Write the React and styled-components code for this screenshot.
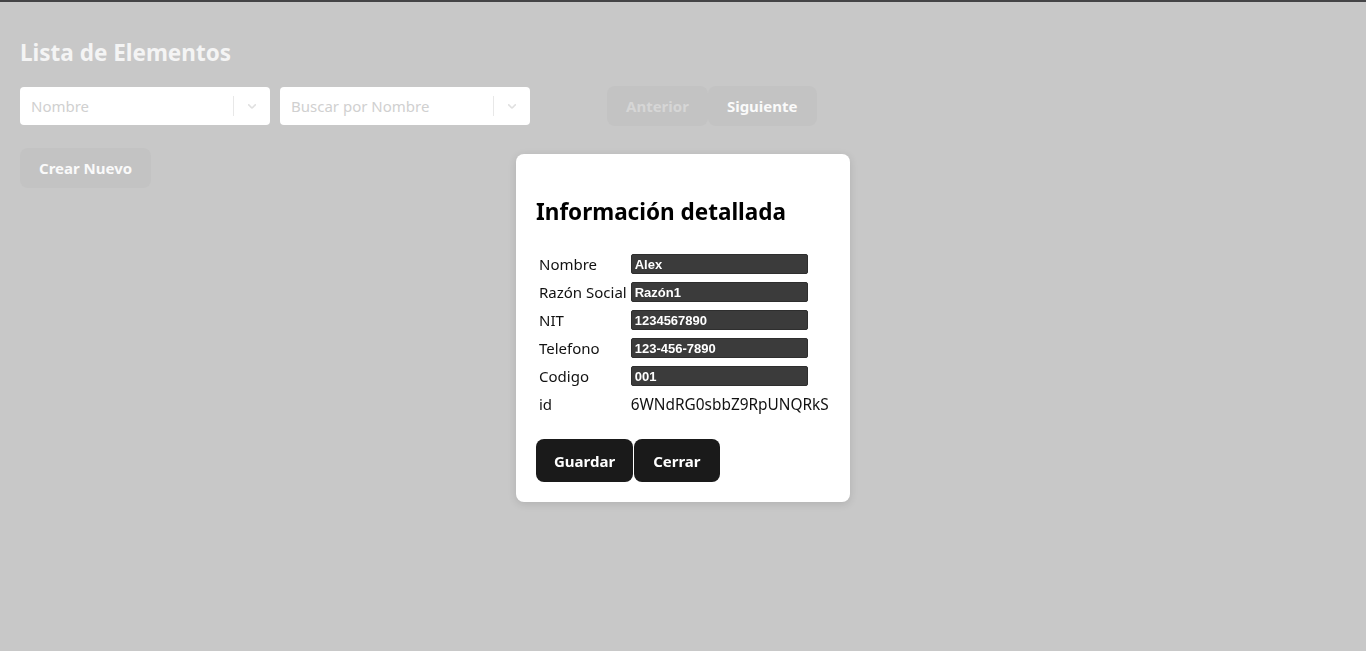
import React from "react";
import styled, { createGlobalStyle } from "styled-components";

const GlobalStyle = createGlobalStyle`
  body {
    margin: 0;
    background: #c8c8c8;
    font-family: "Noto Sans", "Open Sans", sans-serif;
  }
`;

const Page = styled.div`
  min-height: 651px;
  box-sizing: border-box;
  border-top: 2px solid #444446;
  padding: 36px 20px 0;
`;

const Title = styled.h1`
  margin: 0 0 18px;
  font-size: 22.5px;
  font-weight: 700;
  color: #f4f4f4;
  line-height: 30px;
`;

const Toolbar = styled.div`
  display: flex;
  align-items: center;
  gap: 10px;
`;

const Select = styled.div`
  width: 250px;
  height: 38px;
  box-sizing: border-box;
  background: #fff;
  border-radius: 4px;
  display: flex;
  align-items: center;
`;

const Placeholder = styled.span`
  flex: 1;
  padding-left: 11px;
  font-size: 15px;
  color: #d0d0d0;
`;

const Divider = styled.span`
  width: 1px;
  height: 20px;
  background: #e8e8e8;
`;

const Chevron = styled.span`
  width: 36px;
  display: flex;
  justify-content: center;
  color: #e0e0e0;
`;

const Pager = styled.div`
  display: flex;
  margin-left: 67px;
`;

const GhostButton = styled.button`
  height: 40px;
  padding: 0 ${({ pad }) => pad || 19}px;
  margin: 0;
  border: none;
  border-radius: 8px;
  background: #c3c3c3;
  font-family: inherit;
  font-size: 15px;
  font-weight: 700;
  color: ${({ dim }) => (dim ? "#d6d6d6" : "#fafafa")};
`;

const CreateRow = styled.div`
  margin-top: 22px;
`;

const Overlay = styled.div`
  position: fixed;
  inset: 0;
  display: flex;
  justify-content: center;
  align-items: flex-start;
  padding-top: 154px;
`;

const Modal = styled.div`
  width: 334px;
  box-sizing: border-box;
  background: #fff;
  border-radius: 8px;
  box-shadow: 0 2px 8px rgba(0, 0, 0, 0.12);
  padding: 43px 20px 20px;
`;

const ModalTitle = styled.h2`
  margin: 0 0 23px;
  font-size: 22.5px;
  font-weight: 700;
  color: #000;
  line-height: 30px;
`;

const Table = styled.table`
  border-collapse: collapse;
  margin-bottom: 21px;
`;

const Label = styled.td`
  padding: 0 4px 0 3px;
  height: 28px;
  font-size: 15px;
  color: #111;
  white-space: nowrap;
`;

const Value = styled.td`
  padding: 0;
  font-size: 15.4px;
  color: #111;
`;

const Field = styled.input`
  display: block;
  width: 177px;
  height: 20px;
  box-sizing: border-box;
  border: 1px solid #2e2e2e;
  border-radius: 2px;
  background: #3b3b3b;
  color: #fff;
  padding: 0 3px;
  font-family: "Liberation Sans", Arial, sans-serif;
  font-size: 13px;
  font-weight: 700;
`;

const Actions = styled.div`
  display: flex;
  gap: 1px;
`;

const DarkButton = styled.button`
  height: 43px;
  padding: 0 ${({ pad }) => pad || 18}px;
  margin: 0;
  border: none;
  border-radius: 8px;
  background: #1a1a1a;
  color: #fff;
  font-family: inherit;
  font-size: 15px;
  font-weight: 700;
`;

const rows = [
  ["Nombre", "Alex"],
  ["Razón Social", "Razón1"],
  ["NIT", "1234567890"],
  ["Telefono", "123-456-7890"],
  ["Codigo", "001"],
];

function Dropdown({ placeholder }) {
  return (
    <Select>
      <Placeholder>{placeholder}</Placeholder>
      <Divider />
      <Chevron>
        <svg width="14" height="14" viewBox="0 0 20 20" fill="currentColor">
          <path d="M4.516 7.548c0.436-0.446 1.043-0.481 1.576 0l3.908 3.747 3.908-3.747c0.533-0.481 1.141-0.446 1.574 0 0.436 0.445 0.408 1.197 0 1.615-0.406 0.418-4.695 4.502-4.695 4.502-0.217 0.223-0.502 0.335-0.787 0.335s-0.57-0.112-0.789-0.335c0 0-4.287-4.084-4.695-4.502s-0.436-1.17 0-1.615z" />
        </svg>
      </Chevron>
    </Select>
  );
}

export default function App() {
  return (
    <>
      <GlobalStyle />
      <Page>
        <Title>Lista de Elementos</Title>
        <Toolbar>
          <Dropdown placeholder="Nombre" />
          <Dropdown placeholder="Buscar por Nombre" />
          <Pager>
            <GhostButton dim>Anterior</GhostButton>
            <GhostButton>Siguiente</GhostButton>
          </Pager>
        </Toolbar>
        <CreateRow>
          <GhostButton pad={19}>Crear Nuevo</GhostButton>
        </CreateRow>
      </Page>
      <Overlay>
        <Modal>
          <ModalTitle>Información detallada</ModalTitle>
          <Table>
            <tbody>
              {rows.map(([label, value]) => (
                <tr key={label}>
                  <Label>{label}</Label>
                  <Value>
                    <Field defaultValue={value} />
                  </Value>
                </tr>
              ))}
              <tr>
                <Label>id</Label>
                <Value>6WNdRG0sbbZ9RpUNQRkS</Value>
              </tr>
            </tbody>
          </Table>
          <Actions>
            <DarkButton>Guardar</DarkButton>
            <DarkButton pad={19}>Cerrar</DarkButton>
          </Actions>
        </Modal>
      </Overlay>
    </>
  );
}
